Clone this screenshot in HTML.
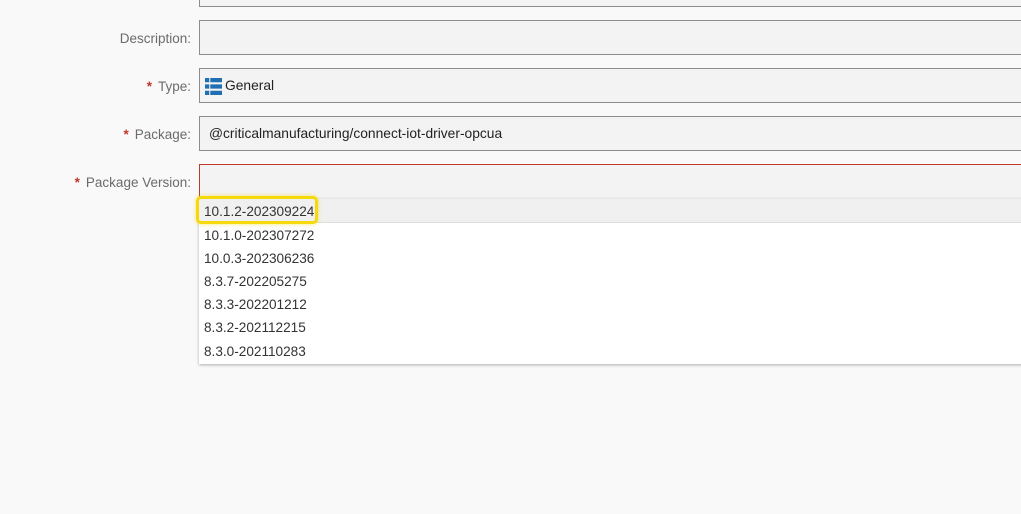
<!DOCTYPE html>
<html><head><meta charset="utf-8"><style>
html,body{margin:0;padding:0;width:1021px;height:514px;overflow:hidden;background:#f9f9f9;font-family:"Liberation Sans",sans-serif;}
.lbl{position:absolute;right:830px;font-size:13.5px;color:#6b6b6b;text-align:right;white-space:nowrap;}
.lbl .s{color:#c0392b;margin-right:6px;font-weight:bold;}
.box{position:absolute;left:199px;width:840px;height:34px;border:1px solid #8c8c8c;background:#f3f3f3;box-sizing:border-box;font-size:13.8px;color:#222;line-height:34px;padding-left:9px;}
.dd{position:absolute;left:199px;top:199px;width:830px;height:165px;background:#fff;box-shadow:0 1px 3px rgba(0,0,0,.3);}
.it{position:absolute;left:5px;font-size:13.6px;color:#333;}
</style></head><body>
<div class="box" style="top:-27px"></div>
<div class="lbl" style="top:31px">Description:</div>
<div class="box" style="top:20px;height:35px"></div>
<div class="lbl" style="top:79px"><span class="s">*</span>Type:</div>
<div class="box" style="top:68px;height:35px;padding-left:25px">General
<svg style="position:absolute;left:5px;top:9px" width="17" height="17" viewBox="0 0 16 16"><g fill="#1f6fb2"><rect x="0" y="0" width="4" height="4"/><rect x="5" y="0" width="11" height="4"/><rect x="0" y="6" width="4" height="4"/><rect x="5" y="6" width="11" height="4"/><rect x="0" y="12" width="4" height="4"/><rect x="5" y="12" width="11" height="4"/></g></svg></div>
<div class="lbl" style="top:127px"><span class="s">*</span>Package:</div>
<div class="box" style="top:116px;height:35px">@criticalmanufacturing/connect-iot-driver-opcua</div>
<div class="lbl" style="top:175px"><span class="s">*</span>Package Version:</div>
<div class="box" style="top:164px;height:36px;border-color:#c0392b"></div>
<div class="dd">
<div style="position:absolute;left:0;top:0;width:100%;height:23px;background:#f0f0f0;border-bottom:1px solid #ddd"></div>
<div style="position:absolute;left:-3px;top:-3px;width:122px;height:28px;border:3px solid #f5d90a;border-radius:5px;box-sizing:border-box;box-shadow:0 0 4px rgba(245,217,10,.6)"></div>
<div class="it" style="top:5px">10.1.2-202309224</div>
<div class="it" style="top:29px">10.1.0-202307272</div>
<div class="it" style="top:52px">10.0.3-202306236</div>
<div class="it" style="top:75px">8.3.7-202205275</div>
<div class="it" style="top:98px">8.3.3-202201212</div>
<div class="it" style="top:121px">8.3.2-202112215</div>
<div class="it" style="top:145px">8.3.0-202110283</div>
</div>
</body></html>
